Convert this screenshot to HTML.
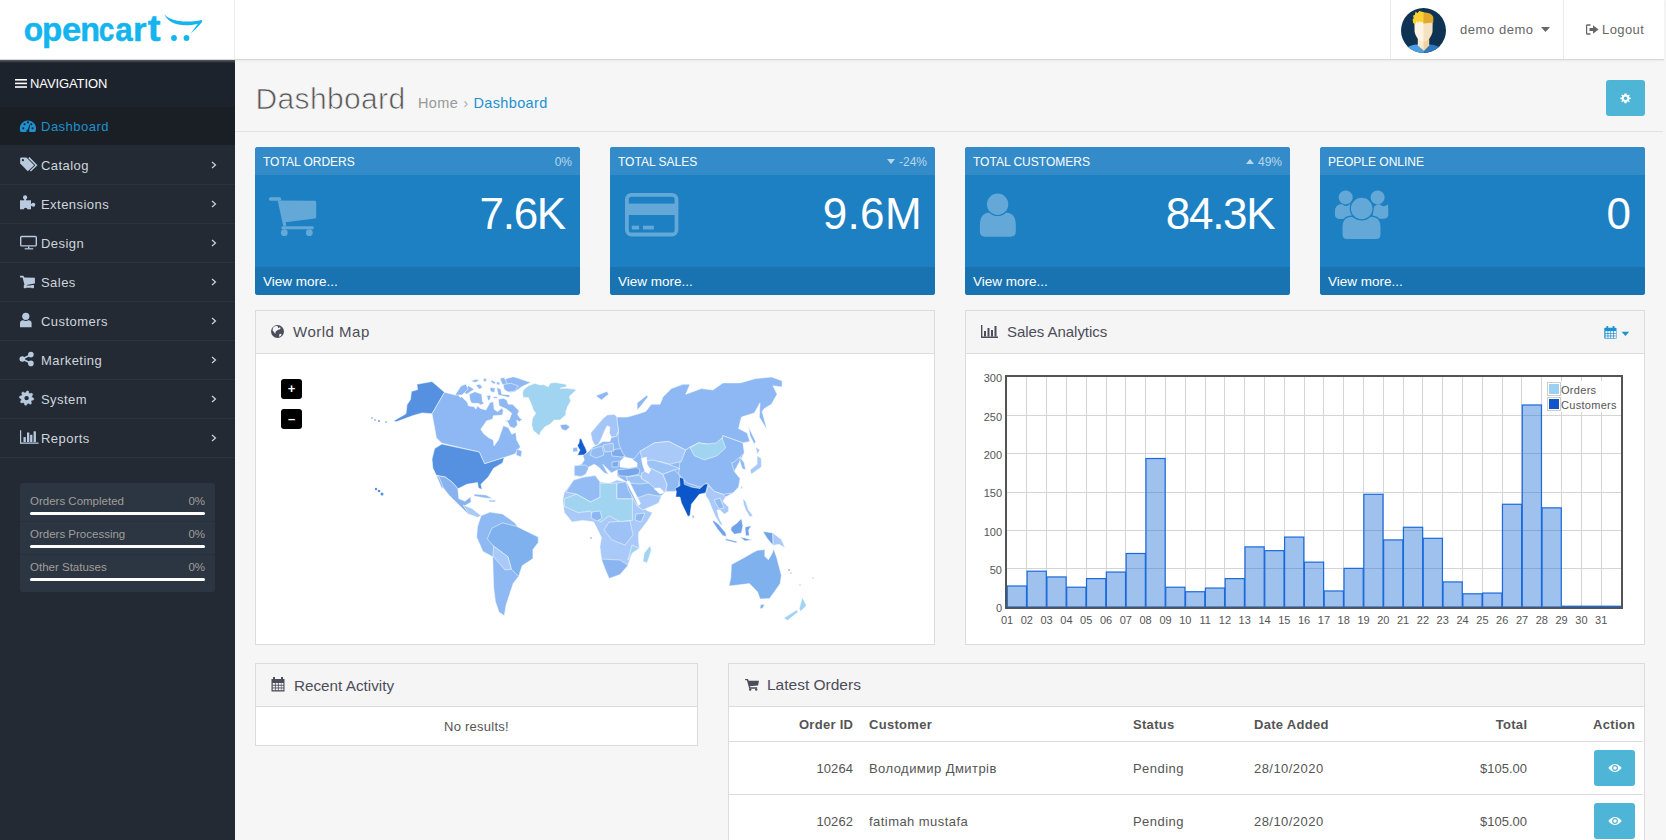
<!DOCTYPE html><html><head><meta charset="utf-8"><title>Dashboard</title><style>
*{box-sizing:border-box;margin:0;padding:0}
html,body{width:1666px;height:840px;overflow:hidden}
body{position:relative;background:#f6f6f6;font-family:"Liberation Sans",sans-serif;font-size:12px;color:#666}
.abs{position:absolute}
#hdr{position:absolute;left:0;top:0;width:1664px;height:60px;background:#fff;border-bottom:1px solid #d8d8d8;box-shadow:0 1px 2px rgba(0,0,0,0.06);z-index:5}
#logo{position:absolute;left:0;top:0;width:235px;height:59px;border-right:1px solid #ececec}
#side{position:absolute;left:0;top:60px;width:235px;height:780px;background:#232a34}
#nav{position:absolute;left:0;top:0;width:235px;height:47px;background:#1d232c;color:#fff;font-size:13px}
.mi{position:absolute;left:0;width:235px;height:39px;border-bottom:1px solid #2b333e;color:#cfd5dc;font-size:13px}
.mi .t{position:absolute;left:41px;top:12px;letter-spacing:0.45px}
.mi .ic{position:absolute;left:19px;top:11px;line-height:0}
.mi .ch{position:absolute;left:211px;top:15px}
.tile{position:absolute;top:147px;width:325px;height:148px;border-radius:3px;background:#1c80c3;color:#fff;overflow:hidden}
.tile .th{position:absolute;left:0;top:0;width:100%;height:28px;background:#338cc9}
.tile .th .l{position:absolute;left:8px;top:8px;font-size:12px}
.tile .th .r{position:absolute;right:8px;top:8px;font-size:12px;color:#b9d6ec}
.tile .tb{position:absolute;right:14px;top:188px}
.tile .tf{position:absolute;left:0;bottom:0;width:100%;height:28px;background:#1973b0}
.tile .tf span{position:absolute;left:8px;top:7px;font-size:13.5px}
.tile .big{position:absolute;right:14px;top:43px;font-size:44px;line-height:48px;letter-spacing:-0.5px}
.tile .icon{position:absolute;left:15px;top:50px}
.panel{position:absolute;background:#fff;border:1px solid #dcdcdc}
.panel .ph{position:absolute;left:0;top:0;width:100%;height:43px;background:#f5f5f5;border-bottom:1px solid #dcdcdc}
.panel .ph .t{position:absolute;left:37px;top:13px;font-size:15px;color:#4c4d5a}
.panel .ph .ic{position:absolute;left:14px;top:15px}
</style></head><body>
<div id="hdr">
<div id="logo">
<svg class="abs" style="left:0;top:0" width="235" height="59" viewBox="0 0 235 59">
<g font-family="Liberation Sans" font-weight="bold" font-size="34" fill="#14b4ee" stroke="#14b4ee" stroke-width="0.5" stroke-linejoin="round"><text transform="translate(25.05,40.8) scale(0.933,1.0) translate(-1.3,0)" x="0" y="0">o</text><text transform="translate(44.25,40.8) scale(0.971,1.0) translate(-2.2,0)" x="0" y="0">p</text><text transform="translate(63.25,40.8) scale(1.018,1.0) translate(-1.3,0)" x="0" y="0">e</text><text transform="translate(82.25,40.8) scale(0.951,1.0) translate(-2.2,0)" x="0" y="0">n</text><text transform="translate(99.85,40.8) scale(0.827,1.0) translate(-1.3,0)" x="0" y="0">c</text><text transform="translate(116.15,40.8) scale(0.922,1.0) translate(-1.0,0)" x="0" y="0">a</text><text transform="translate(135.15,40.8) scale(1.019,1.0) translate(-2.2,0)" x="0" y="0">r</text><text transform="translate(148.15,40.8) scale(1.125,1.08) translate(-0.4,0)" x="0" y="0">t</text></g>
<path d="M164.2 14.3 C171 21.5 185 23.3 201.8 20 L202.3 21.8 C198.5 26.5 195 30 190.8 33.4 C193.5 29.8 195.8 26.8 197.8 23.8 C182 27.5 169 24.5 164.2 14.3Z" fill="#14b4ee"/>
<circle cx="174" cy="38" r="2.9" fill="#14b4ee"/><circle cx="186.5" cy="38" r="2.9" fill="#14b4ee"/>
</svg>
</div>
<div class="abs" style="left:1390px;top:0;width:1px;height:59px;background:#ececec"></div>
<div class="abs" style="left:1563px;top:0;width:1px;height:59px;background:#ececec"></div>
<svg class="abs" style="left:1401px;top:8px" width="45" height="45" viewBox="0 0 45 45">
<defs><clipPath id="avc"><circle cx="22.5" cy="22.5" r="22.5"/></clipPath></defs>
<g clip-path="url(#avc)">
<rect width="45" height="45" fill="#0f3352"/>
<path d="M4 41 Q9 36.5 17 36.5 L23 43.5 L23 45 L4 45Z" fill="#4d9ee3"/>
<path d="M41 41 Q36 36.5 28 36.5 L22.5 43.5 L22.5 45 L41 45Z" fill="#2d78bf"/>
<path d="M16.8 27 L23 27 L23 43 L16.8 37.5Z" fill="#fbecd0"/>
<path d="M28.2 27 L22.5 27 L22.5 43.5 L28.2 37.5Z" fill="#f2d39f"/>
<path d="M13.4 13 L23 13 L23 33.5 L20.5 33.5 Q15 30.5 13.6 24Z" fill="#fef4e4"/>
<path d="M31.7 13 L22.5 13 L22.5 33.5 L24.5 33.5 Q30 30.5 31.5 24Z" fill="#f4e2c2"/>
<path d="M12.2 15 L11.6 11.5 L12.6 10.5 L12.1 7.5 L13.8 7 L14.6 3.6 L16.4 5.2 L18.2 3 L23 4.2 L23 15.5 Q21 12.5 19.5 14.5 L18.5 12.8 L17 15 L15.6 13 L14.3 16.5Z" fill="#fcd232"/>
<path d="M22.5 4.2 Q30.5 4.5 32.3 9 L32.3 14.6 L22.5 15.5Z" fill="#e2a92b"/>
</g></svg>
<div class="abs" style="left:1460px;top:22px;font-size:13px;letter-spacing:0.55px;color:#666">demo demo</div>
<svg class="abs" style="left:1541px;top:27px" width="9" height="5"><path d="M0 0 L9 0 L4.5 5Z" fill="#666"/></svg>
<svg class="abs" style="left:1586px;top:24px" width="13" height="11" viewBox="0 0 13 11">
<path d="M4.5 1 L1.5 1 Q0.5 1 0.5 2 L0.5 9 Q0.5 10 1.5 10 L4.5 10" stroke="#666" stroke-width="1.4" fill="none"/>
<path d="M3.5 4 L7 4 L7 1.2 L12.5 5.5 L7 9.8 L7 7 L3.5 7Z" fill="#666"/></svg>
<div class="abs" style="left:1602px;top:22px;font-size:13px;letter-spacing:0.4px;color:#666">Logout</div>
</div>
<div id="side">
<div id="nav"><div class="abs" style="left:0;top:0;width:235px;height:3px;background:linear-gradient(rgba(255,255,255,0.28),rgba(255,255,255,0))"></div><svg class="abs" style="left:15px;top:19px" width="12" height="9" viewBox="0 0 12 9"><rect y="0" width="12" height="1.6" fill="#fff"/><rect y="3.6" width="12" height="1.6" fill="#fff"/><rect y="7.2" width="12" height="1.6" fill="#fff"/></svg><span class="abs" style="left:30px;top:16px;letter-spacing:-0.1px">NAVIGATION</span></div>
<div class="abs" style="left:0;top:47px;width:235px;height:38px;background:#1a1e25"><span class="abs" style="left:41px;top:12px;font-size:13px;letter-spacing:0.5px;color:#1e91cf">Dashboard</span><svg class="abs" style="left:0;top:0" width="40" height="38" viewBox="0 107 40 38"><path d="M20.6 132 A8.1 8.1 0 1 1 35.2 132 Z" fill="#1e91cf"/><g fill="#1a1e25"><circle cx="23.3" cy="128.3" r="1.05"/><circle cx="24.6" cy="124.2" r="1.05"/><circle cx="27.9" cy="122.4" r="1.05"/><circle cx="31.3" cy="124.2" r="1.05"/><circle cx="32.6" cy="128.3" r="1.05"/></g><path d="M27.1 131.6 L29.6 124.6 L30.2 124.8 L28.8 131.8Z" fill="#1a1e25"/><circle cx="27.9" cy="131" r="1.5" fill="#1a1e25"/></svg></div>
<div class="mi" style="top:86px"><svg class="abs" style="left:0;top:0" width="40" height="39" viewBox="0 146 40 39"><path d="M20.2 158.5 Q20.2 157.4 21.3 157.4 L26.4 157.4 L34.2 165.2 L27.8 171.2 L20.2 163.6Z" fill="#b9cadf"/><circle cx="22.9" cy="160.2" r="1.1" fill="#232a34"/><path d="M28.8 157.6 L36.4 165.2 L30.4 171" stroke="#b9cadf" stroke-width="1.5" fill="none"/></svg><span class="t">Catalog</span><svg class="ch" width="6" height="8" viewBox="0 0 6 8"><path d="M1 1 L4.5 4 L1 7" stroke="#cfd5dc" stroke-width="1.2" fill="none"/></svg></div>
<div class="mi" style="top:125px"><svg class="abs" style="left:0;top:0" width="40" height="39" viewBox="0 185 40 39"><rect x="20" y="200.3" width="11" height="9" fill="#b9cadf"/><circle cx="25.1" cy="197.4" r="2.1" fill="#b9cadf"/><rect x="24.2" y="197.5" width="1.9" height="3.5" fill="#b9cadf"/><circle cx="33.3" cy="204.8" r="2" fill="#b9cadf"/><rect x="30.5" y="203.9" width="3" height="1.9" fill="#b9cadf"/><circle cx="25.6" cy="209.6" r="1.8" fill="#232a34"/></svg><span class="t">Extensions</span><svg class="ch" width="6" height="8" viewBox="0 0 6 8"><path d="M1 1 L4.5 4 L1 7" stroke="#cfd5dc" stroke-width="1.2" fill="none"/></svg></div>
<div class="mi" style="top:164px"><svg class="abs" style="left:0;top:0" width="40" height="39" viewBox="0 224 40 39"><rect x="20.7" y="236.5" width="15.6" height="9.4" rx="1" stroke="#b9cadf" stroke-width="1.4" fill="none"/><rect x="28" y="246.5" width="1.4" height="2" fill="#b9cadf"/><rect x="24.7" y="248.2" width="8.5" height="1.2" fill="#b9cadf"/></svg><span class="t">Design</span><svg class="ch" width="6" height="8" viewBox="0 0 6 8"><path d="M1 1 L4.5 4 L1 7" stroke="#cfd5dc" stroke-width="1.2" fill="none"/></svg></div>
<div class="mi" style="top:203px"><svg class="abs" style="left:0;top:0" width="40" height="39" viewBox="0 263 40 39"><path d="M20 275.8 L23.3 275.8 L24.4 277.6 L34.9 277.8 L34.9 283.6 L26.4 285 L26.8 285.6 L34 285.6 L34 287.8 L25.2 287.8 L22.6 277.4 L20 277.4Z" fill="#b9cadf"/><rect x="23.8" y="285" width="2.3" height="3.2" fill="#b9cadf"/><rect x="31.3" y="285" width="2.5" height="3.2" fill="#b9cadf"/></svg><span class="t">Sales</span><svg class="ch" width="6" height="8" viewBox="0 0 6 8"><path d="M1 1 L4.5 4 L1 7" stroke="#cfd5dc" stroke-width="1.2" fill="none"/></svg></div>
<div class="mi" style="top:242px"><svg class="abs" style="left:0;top:0" width="40" height="39" viewBox="0 302 40 39"><circle cx="25.8" cy="316.3" r="3.6" fill="#b9cadf"/><path d="M20 327.2 L20 323.6 Q20 320.3 23.3 320.3 Q25.8 321.6 28.3 320.3 Q31.6 320.3 31.6 323.6 L31.6 327.2Z" fill="#b9cadf"/></svg><span class="t">Customers</span><svg class="ch" width="6" height="8" viewBox="0 0 6 8"><path d="M1 1 L4.5 4 L1 7" stroke="#cfd5dc" stroke-width="1.2" fill="none"/></svg></div>
<div class="mi" style="top:281px"><svg class="abs" style="left:0;top:0" width="40" height="39" viewBox="0 341 40 39"><path d="M22.3 359 L30.9 354.8 M22.3 359 L30.9 363.3" stroke="#b9cadf" stroke-width="1.6"/><circle cx="30.9" cy="354.6" r="2.8" fill="#b9cadf"/><circle cx="22.3" cy="359" r="2.8" fill="#b9cadf"/><circle cx="30.9" cy="363.4" r="2.8" fill="#b9cadf"/></svg><span class="t">Marketing</span><svg class="ch" width="6" height="8" viewBox="0 0 6 8"><path d="M1 1 L4.5 4 L1 7" stroke="#cfd5dc" stroke-width="1.2" fill="none"/></svg></div>
<div class="mi" style="top:320px"><svg class="abs" style="left:0;top:0" width="40" height="39" viewBox="0 380 40 39"><path d="M25.81 392.76 L26.95 390.91 L28.35 391.12 L28.91 393.22 L29.82 393.76 L31.93 393.26 L32.78 394.40 L31.68 396.28 L31.94 397.31 L33.79 398.45 L33.58 399.85 L31.48 400.41 L30.94 401.32 L31.44 403.43 L30.30 404.28 L28.42 403.18 L27.39 403.44 L26.25 405.29 L24.85 405.08 L24.29 402.98 L23.38 402.44 L21.27 402.94 L20.42 401.80 L21.52 399.92 L21.26 398.89 L19.41 397.75 L19.62 396.35 L21.72 395.79 L22.26 394.88 L21.76 392.77 L22.90 391.92 L24.78 393.02Z" fill="#b9cadf" stroke="#b9cadf" stroke-width="0.6" stroke-linejoin="round"/><circle cx="26.6" cy="398.1" r="2.2" fill="#232a34"/></svg><span class="t">System</span><svg class="ch" width="6" height="8" viewBox="0 0 6 8"><path d="M1 1 L4.5 4 L1 7" stroke="#cfd5dc" stroke-width="1.2" fill="none"/></svg></div>
<div class="mi" style="top:359px"><svg class="abs" style="left:0;top:0" width="40" height="39" viewBox="0 419 40 39"><path d="M20.6 430.2 L20.6 443.2 L38.6 443.2" stroke="#b9cadf" stroke-width="1.2" fill="none"/><rect x="23.5" y="437.1" width="2.3" height="4.9" fill="#b9cadf"/><rect x="27" y="432.5" width="2.3" height="9.5" fill="#b9cadf"/><rect x="30.1" y="434.8" width="2.3" height="7.2" fill="#b9cadf"/><rect x="33.6" y="431.3" width="2.3" height="10.7" fill="#b9cadf"/></svg><span class="t">Reports</span><svg class="ch" width="6" height="8" viewBox="0 0 6 8"><path d="M1 1 L4.5 4 L1 7" stroke="#cfd5dc" stroke-width="1.2" fill="none"/></svg></div>
<div class="abs" style="left:20px;top:423px;width:195px;height:109px;background:#2c3643;border-radius:3px">
<span class="abs" style="left:10px;top:12px;font-size:11.5px;color:#a09d98">Orders Completed</span><span class="abs" style="right:10px;top:12px;font-size:11.5px;color:#a09d98">0%</span>
<div class="abs" style="left:10px;top:28.8px;width:175px;height:3.6px;background:#fff;border-radius:2px"></div>
<div class="abs" style="left:0;top:37.6px;width:195px;height:1px;background:#27303b"></div>
<span class="abs" style="left:10px;top:45px;font-size:11.5px;color:#a09d98">Orders Processing</span><span class="abs" style="right:10px;top:45px;font-size:11.5px;color:#a09d98">0%</span>
<div class="abs" style="left:10px;top:61.8px;width:175px;height:3.6px;background:#fff;border-radius:2px"></div>
<div class="abs" style="left:0;top:70.6px;width:195px;height:1px;background:#27303b"></div>
<span class="abs" style="left:10px;top:78px;font-size:11.5px;color:#a09d98">Other Statuses</span><span class="abs" style="right:10px;top:78px;font-size:11.5px;color:#a09d98">0%</span>
<div class="abs" style="left:10px;top:94.8px;width:175px;height:3.6px;background:#fff;border-radius:2px"></div>
</div>
</div>
<div class="abs" style="left:235px;top:131px;width:1428px;height:1px;background:#e2e2e2"></div>
<div class="abs" style="left:255.5px;top:81.5px;font-size:30px;color:#555;letter-spacing:0.35px;-webkit-text-stroke:0.7px #f6f6f6">Dashboard</div>
<div class="abs" style="left:418px;top:94.5px;font-size:14.5px;letter-spacing:0.35px;color:#999">Home <span style="font-size:14px;color:#aaa;margin:0 0 0 1px;letter-spacing:0">&#8250;</span> <span style="color:#1e91cf;letter-spacing:0.35px;margin-left:1px">Dashboard</span></div>
<div class="abs" style="left:1606px;top:80px;width:39px;height:36px;background:#4fb5d6;border-radius:3px"><svg class="abs" style="left:14px;top:13px" width="11" height="11" viewBox="0 0 14 14"><path d="M7 0.5 L8.3 0.5 L8.6 2.3 L10 2.9 L11.5 1.8 L12.4 2.8 L11.3 4.2 L11.9 5.6 L13.6 5.9 L13.6 7.6 L11.9 7.9 L11.3 9.3 L12.4 10.7 L11.5 11.7 L10 10.6 L8.6 11.2 L8.3 13 L5.7 13 L5.4 11.2 L4 10.6 L2.5 11.7 L1.6 10.7 L2.7 9.3 L2.1 7.9 L0.4 7.6 L0.4 5.9 L2.1 5.6 L2.7 4.2 L1.6 2.8 L2.5 1.8 L4 2.9 L5.4 2.3 L5.7 0.5Z" fill="#fff"/><circle cx="7" cy="6.75" r="2.2" fill="#4fb5d6"/></svg></div>
<div class="tile" style="left:255px">
<div class="th"><span class="l">TOTAL ORDERS</span>
<span class="r">0%</span>
</div>
<svg class="abs" style="left:0;top:0" width="325" height="148"><g transform="translate(7,41)"><path d="M8.6 11 L17.6 11" stroke="#64a8d8" stroke-width="3.4" stroke-linecap="round"/><path d="M15.6 12.4 L53 12.8 Q54.2 12.9 54.2 14.2 L54.2 29.2 Q54.2 30.2 53 30.4 L23.6 34.2 L24.4 37.6 L21.4 38.6 Z" fill="#64a8d8"/><path d="M20.8 39.8 L50.4 39.8" stroke="#64a8d8" stroke-width="3" stroke-linecap="round"/><circle cx="22.3" cy="44.7" r="3.4" fill="#64a8d8"/><circle cx="47.3" cy="44.7" r="3.4" fill="#64a8d8"/></g></svg>
<div class="big" style="letter-spacing:-1.33px;right:15.2px">7.6K</div>
<div class="tf"><span>View more...</span></div>
</div>
<div class="tile" style="left:610px">
<div class="th"><span class="l">TOTAL SALES</span>
<span class="r"><svg width="8" height="5" style="margin-right:4px;vertical-align:2px"><path d="M0 0 L8 0 L4 5Z" fill="#b9d6ec"/></svg>-24%</span>
</div>
<svg class="abs" style="left:0;top:0" width="325" height="148"><g transform="translate(15,46)"><rect x="1.9" y="1.9" width="49.6" height="39.6" rx="4.5" stroke="#64a8d8" stroke-width="3.8" fill="none"/><rect x="2" y="10.6" width="50" height="11.4" fill="#64a8d8"/><rect x="6.8" y="32.7" width="7.3" height="3.8" fill="#64a8d8"/><rect x="17.9" y="32.7" width="11" height="3.8" fill="#64a8d8"/></g></svg>
<div class="big" style="letter-spacing:0.37px;right:13px">9.6M</div>
<div class="tf"><span>View more...</span></div>
</div>
<div class="tile" style="left:965px">
<div class="th"><span class="l">TOTAL CUSTOMERS</span>
<span class="r"><svg width="8" height="5" style="margin-right:4px;vertical-align:2px"><path d="M0 5 L8 5 L4 0Z" fill="#b9d6ec"/></svg>49%</span>
</div>
<svg class="abs" style="left:0;top:0" width="325" height="148"><g transform="translate(-965,-147)"><path d="M979.9 231.5 L979.9 225 Q979.9 212.6 990.5 212.6 Q997.5 219 1005 212.6 Q1015.8 212.6 1015.8 225 L1015.8 231.5 Q1015.8 236.7 1010.6 236.7 L985.1 236.7 Q979.9 236.7 979.9 231.5Z" fill="#64a8d8"/><circle cx="997.6" cy="204.3" r="11.8" fill="#1c80c3"/><circle cx="997.6" cy="204.3" r="10.7" fill="#64a8d8"/></g></svg>
<div class="big" style="letter-spacing:-1.3px;right:15.7px">84.3K</div>
<div class="tf"><span>View more...</span></div>
</div>
<div class="tile" style="left:1320px">
<div class="th"><span class="l">PEOPLE ONLINE</span>
</div>
<svg class="abs" style="left:0;top:0" width="325" height="148"><g transform="translate(-1320,-147)"><path d="M1335 228 L1335 212 Q1335 204.3 1342 204.3 Q1346 208 1350 204.3 Q1356.5 204.3 1356.5 212 L1356.5 228 Q1356.5 218.7 1350 218.7 L1341 218.7 Q1335 218.7 1335 214Z" fill="#64a8d8"/><path d="M1335 212.5 Q1335 204.3 1342 204.3 Q1346 208 1350 204.3 Q1356.5 204.3 1356.5 212 L1356.5 214.6 Q1356.5 218.7 1352 218.7 L1339 218.7 Q1335 218.7 1335 214.6Z" fill="#64a8d8"/><path d="M1372.7 212.5 Q1372.7 204.3 1379.7 204.3 Q1383.7 208 1387.7 204.3 Q1388.3 204.3 1388.3 212 L1388.3 214.6 Q1388.3 218.7 1384 218.7 L1376.7 218.7 Q1372.7 218.7 1372.7 214.6Z" fill="#64a8d8"/><circle cx="1345.7" cy="197.4" r="7" fill="#64a8d8"/><circle cx="1377.6" cy="197.4" r="7" fill="#64a8d8"/><path d="M1341.9 234.5 L1341.9 227 Q1341.9 216.1 1352 216.1 Q1361.7 223 1371 216.1 Q1381.1 216.1 1381.1 227 L1381.1 234.5 Q1381.1 239.7 1376 239.7 L1347 239.7 Q1341.9 239.7 1341.9 234.5Z" fill="#64a8d8" stroke="#1c80c3" stroke-width="1.3"/><circle cx="1361.7" cy="208.5" r="11.4" fill="#64a8d8" stroke="#1c80c3" stroke-width="1.3"/></g></svg>
<div class="big" style="letter-spacing:0px;right:14px">0</div>
<div class="tf"><span>View more...</span></div>
</div>
<div class="panel" style="left:255px;top:310px;width:680px;height:335px">
<div class="ph"><span class="ic" style="left:15px;top:14px;line-height:0"><svg width="13" height="13" viewBox="0 0 13 13"><circle cx="6.5" cy="6.5" r="6.5" fill="#4c4d5a"/><path d="M2.2 2.5 Q4 0.8 6.5 1.2 Q7.5 2 7 3 Q8.5 3.2 8.8 2 Q9.8 2.5 9.5 3.8 Q8 5 7.2 4.6 Q6.2 6.2 5.2 6 Q4.2 6.8 4.6 8.4 Q3.6 8.6 3.2 7.2 Q2.2 6 1.6 5.4 Q1.6 3.6 2.2 2.5Z M8.6 8.8 Q10 8.4 10.6 9.4 Q10 11 8.6 11.8 Q7.8 11.2 8.2 10.2Z" fill="#f5f5f5"/></svg></span><span class="t" style="top:12px;letter-spacing:0.5px">World Map</span></div>
</div>
<div class="abs" style="left:281px;top:379px;width:21px;height:20px;background:#000;border-radius:3px;color:#fff;font-size:13px;line-height:20px;text-align:center;font-weight:bold">+</div>
<div class="abs" style="left:281px;top:409px;width:21px;height:20px;background:#000;border-radius:3px;color:#fff;font-size:13px;line-height:19px;text-align:center;font-weight:bold">&#8211;</div>
<svg class="abs" style="left:256px;top:354px" width="678" height="290" viewBox="256 354 678 290">
<g stroke="#ffffff" stroke-width="0.5" stroke-linejoin="round">
<path d="M416.8 384.3 L432.0 381.6 L444.5 392.3 L432.0 413.8 L422.1 412.9 L413.2 415.5 L396.3 421.8 L393.6 420.9 L406.0 413.8 L407.0 404.8 L410.5 399.5 L411.4 391.4 L417.7 389.6Z" fill="#5591e0"/>
<path d="M444.5 392.3 L455.0 395.0 L458.3 394.2 L460.0 397.5 L461.7 396.7 L467.5 402.5 L468.3 405.8 L474.2 406.7 L475.8 409.2 L477.5 405.8 L480.0 408.3 L485.8 410.0 L488.3 405.8 L490.0 402.5 L493.3 401.7 L494.2 409.2 L497.5 411.7 L501.7 408.3 L503.3 410.0 L502.5 415.0 L493.3 415.8 L492.5 419.2 L486.7 420.8 L480.8 429.2 L483.3 433.3 L488.3 437.5 L493.3 440.0 L494.0 446.0 L498.3 440.0 L503.3 425.8 L508.3 427.5 L510.0 430.8 L511.7 434.2 L515.8 432.5 L516.7 440.0 L520.4 446.8 L515.0 453.9 L504.3 457.5 L484.6 463.8 L479.3 452.1 L441.8 443.2 L436.4 437.9 L432.0 413.8Z" fill="#8db8f3"/>
<path d="M498.3 399.2 L503.3 398.3 L506.7 400.0 L508.3 404.2 L512.5 404.2 L515.0 406.7 L519.2 410.8 L517.5 414.2 L520.0 418.3 L522.5 419.2 L519.2 421.7 L516.7 420.0 L517.5 425.0 L514.2 428.3 L510.0 426.7 L507.5 421.7 L504.2 420.8 L509.2 420.0 L511.7 413.3 L506.7 409.2 L499.2 405.8Z" fill="#8db8f3"/>
<path d="M469.2 394.2 L475.0 391.7 L481.7 394.2 L482.5 401.7 L484.2 403.3 L480.8 405.0 L478.3 403.3 L471.7 403.3 L470.0 400.0Z" fill="#8db8f3"/>
<path d="M463.3 391.7 L468.3 385.8 L474.2 389.2 L466.7 394.2Z" fill="#8db8f3"/>
<path d="M507.5 378.3 L513.3 376.7 L518.3 378.3 L530.8 382.5 L521.7 386.7 L515.0 391.7 L510.0 392.5 L504.2 390.0 L509.2 386.7 L501.7 380.8Z" fill="#8db8f3"/>
<path d="M496.7 387.5 L500.8 389.2 L501.7 394.2 L510.0 395.0 L509.2 397.5 L498.3 395.0Z" fill="#8db8f3"/>
<path d="M470.8 380.8 L476.7 379.2 L479.2 380.8 L475.0 382.5Z" fill="#8db8f3"/>
<path d="M475.8 385.0 L480.0 384.2 L482.5 387.5 L479.2 389.2Z" fill="#8db8f3"/>
<path d="M486.7 395.8 L490.8 395.0 L490.0 399.2 L488.3 400.8Z" fill="#8db8f3"/>
<path d="M493.3 396.7 L498.3 396.7 L496.7 398.3 L493.3 398.3Z" fill="#8db8f3"/>
<path d="M491.7 380.0 L495.8 382.5 L494.2 384.2 L490.8 381.7Z" fill="#8db8f3"/>
<path d="M500.0 378.3 L504.2 377.5 L507.5 384.2 L504.2 385.8 L501.7 383.3Z" fill="#8db8f3"/>
<path d="M517.0 449.0 L522.0 451.0 L521.0 457.0 L516.0 455.0Z" fill="#8db8f3"/>
<path d="M483.3 378.3 L486.7 378.8 L486.0 381.7 L483.5 381.2Z" fill="#8db8f3"/>
<path d="M496.7 381.7 L500.0 382.5 L499.5 385.0 L496.5 384.5Z" fill="#8db8f3"/>
<path d="M490.0 387.5 L495.0 388.0 L494.5 392.5 L490.5 391.5Z" fill="#8db8f3"/>
<path d="M503.3 384.5 L511.0 383.3 L518.3 386.0 L515.0 391.0 L508.0 392.0 L504.0 389.0Z" fill="#8db8f3"/>
<path d="M455.0 395.0 L461.0 386.0 L466.0 384.0 L468.0 389.0 L462.0 395.0Z" fill="#8db8f3"/>
<path d="M523.3 390.0 L528.3 385.8 L535.0 383.3 L540.0 385.0 L543.3 384.6 L548.3 386.7 L550.0 383.3 L555.0 382.5 L565.8 384.2 L566.7 386.7 L560.0 388.3 L567.5 388.3 L576.7 389.6 L571.7 394.2 L569.2 396.7 L570.8 400.8 L567.5 406.7 L565.8 411.7 L565.8 415.0 L560.0 420.0 L554.2 420.0 L550.0 424.2 L545.0 426.7 L540.8 431.7 L539.2 435.8 L536.7 433.3 L533.3 430.8 L531.7 425.0 L532.5 418.3 L535.8 413.3 L533.3 410.0 L531.7 405.0 L528.3 397.5 L523.3 397.5 L522.5 393.3Z" fill="#a1d4f0"/>
<path d="M560.0 425.0 L565.8 424.2 L570.0 426.7 L565.8 430.8 L561.7 429.2Z" fill="#8ab4f0"/>
<path d="M441.8 444.1 L479.3 452.1 L484.6 463.8 L504.3 457.5 L502.5 462.9 L493.6 468.2 L488.2 477.1 L481.0 484.3 L482.0 489.6 L478.4 487.9 L477.5 482.5 L466.8 484.3 L457.9 488.8 L452.5 482.5 L445.4 477.1 L436.4 475.4 L432.9 468.2 L432.0 459.3 L434.6 448.6Z" fill="#5591e0"/>
<path d="M436.4 475.4 L445.4 477.1 L452.5 482.5 L457.9 488.8 L458.8 498.6 L465.0 501.2 L470.4 496.8 L471.2 502.0 L465.0 505.7 L472.1 512.9 L468.6 514.6 L457.9 503.9 L448.9 495.0 L441.8 486.0 L438.2 478.9Z" fill="#88b3ef"/>
<path d="M436.4 475.4 L439.0 477.0 L443.0 487.0 L442.0 489.0Z" fill="#88b3ef"/>
<path d="M463.2 505.0 L472.1 508.6 L481.1 515.7 L477.5 517.5 L468.6 513.9Z" fill="#a9caf8"/>
<path d="M474.0 494.0 L486.0 495.0 L493.0 498.5 L485.0 498.0 L474.0 496.0Z" fill="#8fb9f3"/>
<path d="M489.0 500.0 L496.0 500.0 L495.0 502.0 L489.0 502.0Z" fill="#a9caf8"/>
<path d="M481.1 515.7 L490.0 512.1 L502.5 513.9 L515.0 522.9 L518.6 528.2 L538.2 537.1 L538.2 542.5 L532.9 549.6 L532.9 558.6 L522.1 565.7 L518.6 576.4 L513.2 583.6 L509.6 594.3 L506.1 605.0 L504.3 615.7 L498.9 612.1 L495.4 601.4 L493.6 587.1 L492.7 556.8 L482.9 551.4 L476.6 537.1 L477.5 526.4Z" fill="#8fb9f3"/>
<path d="M491.8 528.2 L502.5 522.9 L516.8 526.4 L538.2 537.1 L538.2 542.5 L532.9 549.6 L532.9 558.6 L522.1 565.7 L518.6 576.4 L511.4 569.3 L507.9 556.8 L493.6 546.1 L487.3 538.9Z" fill="#80b1ef"/>
<path d="M493.6 546.1 L507.9 556.8 L511.4 569.3 L505.0 570.0 L498.0 562.0 L493.0 556.0Z" fill="#a9caf8"/>
<path d="M564.3 492.5 L573.6 480.1 L584.4 477.0 L595.2 475.5 L599.9 481.7 L609.2 483.2 L616.9 480.1 L626.2 481.7 L630.9 491.0 L638.6 504.9 L647.9 511.1 L652.5 512.6 L647.9 520.4 L638.6 532.8 L638.6 540.5 L639.4 548.2 L632.4 552.9 L627.8 565.3 L620.0 574.6 L609.2 578.4 L606.1 571.5 L601.4 559.1 L599.9 546.7 L601.4 537.4 L596.8 528.1 L593.7 521.9 L582.9 520.4 L572.0 521.9 L564.3 512.6 L562.7 500.2Z" fill="#a9caf8"/>
<path d="M598.3 483.2 L616.9 483.2 L616.9 498.7 L632.4 498.7 L632.4 520.4 L620.0 521.9 L609.2 515.7 L601.4 521.9 L593.7 518.8 L590.6 511.1 L578.2 512.6 L564.3 506.4 L564.3 498.7 L576.7 494.1 L590.6 501.8 L599.9 497.2Z" fill="#a1d4f0"/>
<path d="M573.6 480.1 L584.4 477.0 L595.2 475.5 L599.9 481.7 L599.9 497.2 L590.6 501.8 L576.7 494.1 L566.0 492.0Z" fill="#93bcf4"/>
<path d="M616.9 483.2 L626.2 481.7 L630.9 491.0 L632.4 498.7 L616.9 498.7Z" fill="#93bcf4"/>
<path d="M592.0 512.0 L600.0 511.0 L602.0 518.0 L597.0 521.0 L591.0 518.0Z" fill="#8db6f2"/>
<path d="M609.0 522.0 L630.0 521.0 L633.0 535.0 L625.0 545.0 L612.0 540.0 L604.0 530.0Z" fill="#9ec2f6"/>
<path d="M601.4 559.1 L620.0 560.0 L628.0 565.3 L620.0 574.6 L609.2 578.4 L606.1 571.5Z" fill="#8ab5f1"/>
<path d="M632.0 545.0 L639.4 548.2 L632.4 552.9 L628.0 560.0Z" fill="#a1d4f0"/>
<path d="M650.0 545.7 L651.4 550.0 L647.1 562.9 L642.9 561.4 L644.3 552.9Z" fill="#a1d4f0"/>
<path d="M636.0 514.0 L645.0 513.0 L641.0 522.0 L635.0 520.0Z" fill="#8fb9f3"/>
<path d="M582.9 455.7 L588.6 451.4 L592.9 447.1 L598.6 444.3 L602.9 441.4 L610.0 441.4 L611.4 437.1 L614.3 437.1 L617.1 434.3 L618.6 430.0 L617.1 421.4 L625.0 425.0 L660.0 420.0 L700.0 415.0 L735.0 425.0 L742.0 440.0 L744.3 452.9 L734.3 471.4 L740.0 478.6 L738.6 487.1 L732.9 492.9 L725.7 497.1 L705.7 492.9 L700.0 488.6 L691.4 487.1 L675.7 491.4 L665.7 491.4 L661.4 495.7 L658.6 502.9 L642.9 510.0 L637.1 505.7 L628.6 490.0 L626.0 481.7 L620.0 478.0 L617.1 476.0 L617.1 470.0 L611.4 472.9 L608.6 470.0 L602.9 464.3 L605.7 470.0 L608.6 474.3 L604.3 472.9 L598.6 467.1 L594.3 464.3 L588.6 467.1 L585.7 474.3 L581.4 476.4 L574.3 475.7 L574.3 465.7 L581.4 464.3 L584.3 460.0Z" fill="#8fb9f3"/>
<path d="M579.5 438.5 L581.5 439.0 L583.0 443.0 L585.5 448.0 L587.0 452.0 L584.0 455.0 L577.5 455.2 L580.0 450.0 L578.6 448.0 L577.5 445.5 L579.0 443.0Z" fill="#125ccf"/>
<path d="M572.9 447.9 L577.1 447.1 L577.9 451.4 L572.9 452.1Z" fill="#8fb9f3"/>
<path d="M590.7 432.9 L595.7 427.1 L602.9 418.6 L607.1 415.0 L614.3 414.3 L617.1 417.1 L618.6 430.0 L616.4 436.4 L611.4 437.1 L609.3 432.9 L610.0 427.1 L607.1 425.7 L604.3 431.4 L601.4 438.6 L598.6 444.3 L595.0 445.7 L592.1 440.0Z" fill="#a3c5f7"/>
<path d="M611.0 450.0 L625.0 448.0 L631.0 454.0 L622.0 457.0 L612.0 456.0Z" fill="#7eabec"/>
<path d="M592.0 449.0 L602.0 446.0 L604.0 455.0 L596.0 458.0 L590.0 455.0Z" fill="#93bcf4"/>
<path d="M603.0 445.0 L613.0 443.0 L614.0 451.0 L605.0 452.0Z" fill="#9fc3f5"/>
<path d="M574.3 465.7 L585.7 465.0 L588.6 468.0 L585.7 474.3 L581.4 476.4 L574.3 475.7Z" fill="#93bcf4"/>
<path d="M617.1 470.0 L637.1 467.6 L640.0 470.0 L638.6 474.3 L628.6 476.4 L618.6 475.7Z" fill="#77a6ea"/>
<path d="M612.0 462.0 L619.0 461.0 L618.0 467.0 L612.0 467.0Z" fill="#7eabec"/>
<path d="M595.7 395.7 L607.1 391.4 L608.6 394.3 L601.4 400.0Z" fill="#8db8f3"/>
<path d="M637.1 402.9 L647.1 395.0 L647.9 397.1 L640.0 407.1 L637.1 410.0Z" fill="#8db8f3"/>
<path d="M617.1 417.1 L627.1 417.1 L637.1 414.3 L645.7 411.4 L651.4 404.3 L660.0 404.3 L662.9 397.1 L671.4 388.6 L682.9 384.3 L690.0 384.3 L685.7 394.3 L701.4 388.6 L712.9 390.0 L722.9 382.9 L740.0 382.9 L755.7 378.6 L771.4 377.1 L782.1 380.7 L782.1 387.1 L772.9 385.7 L777.1 394.3 L771.4 404.3 L764.3 408.6 L762.1 411.4 L767.1 430.0 L759.3 417.1 L760.0 402.9 L754.3 412.9 L741.4 417.1 L738.6 428.6 L747.1 432.9 L750.0 441.4 L742.9 442.9 L722.9 435.7 L720.0 445.7 L707.1 444.3 L698.6 442.9 L690.0 447.1 L685.7 450.0 L668.6 441.4 L654.3 442.9 L640.0 451.4 L634.3 458.6 L627.1 459.0 L622.0 452.0 L619.0 444.3 L618.0 437.1 L618.6 430.0 L617.1 421.4Z" fill="#8db8f3"/>
<path d="M690.0 447.1 L698.6 442.9 L707.1 444.3 L720.0 445.7 L722.9 435.7 L742.9 442.9 L744.3 452.9 L740.0 457.1 L734.0 462.0 L731.4 462.9 L734.3 471.4 L740.0 478.6 L738.6 487.1 L732.9 492.9 L722.9 494.3 L714.3 491.4 L707.1 482.9 L700.0 487.1 L687.1 482.9 L678.6 474.3 L680.0 461.4 L685.7 450.0Z" fill="#8db8f3"/>
<path d="M690.0 447.9 L698.6 442.9 L707.0 444.0 L716.0 443.0 L722.0 438.0 L725.7 447.9 L717.1 455.7 L704.3 460.0 L694.3 455.7Z" fill="#a1d4f0"/>
<path d="M640.0 451.4 L654.3 442.9 L668.6 441.4 L685.7 450.0 L681.4 461.4 L670.0 464.3 L660.0 461.4 L651.4 464.3 L642.9 461.4Z" fill="#a9caf8"/>
<path d="M642.9 461.4 L652.9 460.0 L668.6 464.3 L680.0 468.6 L674.3 470.0 L662.9 474.3 L651.4 468.6 L645.0 467.0Z" fill="#9cc3f6"/>
<path d="M641.4 472.9 L651.4 468.6 L662.9 474.3 L667.1 484.3 L665.7 491.4 L657.1 490.0 L648.6 482.9 L641.4 478.6Z" fill="#a9caf8"/>
<path d="M662.9 474.3 L674.3 470.0 L680.0 475.7 L678.6 485.7 L675.7 491.4 L665.7 491.4 L667.1 484.3Z" fill="#8fb9f3"/>
<path d="M626.0 477.0 L640.0 475.0 L641.4 478.6 L648.6 482.9 L640.0 484.0 L628.6 482.9Z" fill="#9cc3f6"/>
<path d="M637.0 498.0 L648.0 494.0 L658.0 496.0 L661.4 495.7 L658.6 502.9 L642.9 510.0 L637.1 505.7Z" fill="#a9caf8"/>
<path d="M620.0 461.4 L624.3 457.1 L631.4 458.6 L637.1 462.9 L637.1 466.5 L628.6 468.0 L620.0 467.1Z" fill="#ffffff"/>
<path d="M641.4 458.6 L646.4 457.1 L647.1 464.3 L650.7 470.0 L648.6 473.6 L645.0 471.4 L642.9 465.7Z" fill="#ffffff"/>
<path d="M626.5 481.5 L629.0 481.0 L640.5 503.5 L638.6 505.5Z" fill="#ffffff"/>
<path d="M654.0 488.5 L660.0 488.0 L664.0 492.5 L660.0 494.0Z" fill="#ffffff"/>
<path d="M679.3 477.1 L683.6 478.6 L684.3 484.3 L691.4 487.1 L700.0 488.6 L704.3 484.3 L707.9 483.6 L705.7 492.9 L699.3 494.3 L691.4 504.3 L690.0 515.7 L687.9 516.4 L681.4 502.9 L680.0 497.1 L675.7 497.1 L676.4 491.4 L675.0 488.6 L680.0 485.7Z" fill="#0b57c9"/>
<path d="M705.7 492.9 L708.6 485.7 L714.3 491.4 L722.9 494.3 L725.7 497.1 L722.9 501.4 L728.6 507.1 L728.6 511.4 L724.3 514.3 L720.0 510.0 L717.1 510.0 L718.6 517.1 L722.9 525.7 L720.0 524.3 L715.0 515.7 L711.4 507.1 L708.6 500.0 L705.7 495.7Z" fill="#a9caf8"/>
<path d="M714.0 500.0 L720.0 498.0 L724.0 508.0 L719.0 509.0Z" fill="#93bcf4"/>
<path d="M692.1 515.0 L694.3 515.7 L693.6 518.6 L692.1 517.9Z" fill="#8fb9f3"/>
<path d="M712.9 520.0 L718.6 524.3 L725.7 532.9 L726.4 536.4 L722.9 535.7 L717.1 528.6 L712.9 522.1Z" fill="#6fa2e8"/>
<path d="M725.7 538.6 L737.1 541.4 L736.4 542.9 L725.7 540.3Z" fill="#6fa2e8"/>
<path d="M731.4 527.1 L737.1 522.9 L741.4 518.6 L742.9 525.7 L741.4 532.9 L734.3 534.3 L730.7 530.0Z" fill="#6fa2e8"/>
<path d="M745.0 527.1 L751.4 525.7 L748.6 530.0 L749.3 535.7 L745.7 535.7Z" fill="#6fa2e8"/>
<path d="M742.9 498.6 L745.7 501.4 L748.6 510.0 L752.9 515.7 L750.0 517.1 L745.7 510.0 L743.6 504.3Z" fill="#a9caf8"/>
<path d="M741.0 486.0 L742.5 486.5 L742.0 489.0 L740.5 488.5Z" fill="#a9caf8"/>
<path d="M762.9 531.4 L772.9 532.9 L773.1 545.5 L767.1 538.3Z" fill="#6fa2e8"/>
<path d="M772.9 532.9 L781.4 539.5 L785.0 547.9 L779.0 544.3 L773.1 545.5Z" fill="#a9caf8"/>
<path d="M740.0 537.0 L745.0 538.0 L752.0 540.0 L745.0 541.0Z" fill="#6fa2e8"/>
<path d="M757.1 455.7 L761.4 458.6 L761.4 467.1 L751.4 474.3 L750.0 470.0 L757.1 464.3Z" fill="#a9caf8"/>
<path d="M755.7 447.1 L760.0 450.0 L757.1 454.3Z" fill="#a9caf8"/>
<path d="M748.6 427.1 L755.7 441.4 L754.3 444.3 L750.0 435.7Z" fill="#8db8f3"/>
<path d="M740.0 457.1 L744.3 462.9 L745.7 470.0 L742.1 468.6 L740.0 461.4Z" fill="#8fb9f3"/>
<path d="M731.4 564.5 L744.5 557.4 L752.9 552.6 L757.6 550.2 L764.8 549.6 L764.8 556.2 L768.3 559.8 L771.9 553.8 L773.7 549.0 L776.7 557.4 L778.5 564.5 L781.4 575.2 L780.2 583.6 L774.3 591.9 L769.5 598.5 L760.0 599.0 L757.6 591.9 L754.0 588.3 L749.3 583.6 L739.8 584.8 L729.0 586.0 L730.8 577.6Z" fill="#80b1ef"/>
<path d="M760.6 604.4 L764.8 604.4 L762.4 608.6 L760.0 608.6Z" fill="#80b1ef"/>
<path d="M802.3 597.3 L806.4 605.6 L800.5 611.5 L799.3 608.6Z" fill="#a1d4f0"/>
<path d="M796.9 609.8 L798.1 612.1 L787.4 620.5 L783.8 618.1Z" fill="#a1d4f0"/>
</g>
<circle cx="372" cy="418" r="0.8" fill="#5591e0"/>
<circle cx="375" cy="420" r="0.8" fill="#5591e0"/>
<circle cx="379" cy="421" r="0.9" fill="#5591e0"/>
<circle cx="386" cy="422" r="0.8" fill="#5591e0"/>
<circle cx="376" cy="489" r="1.2" fill="#5591e0"/>
<circle cx="379" cy="491" r="1.3" fill="#5591e0"/>
<circle cx="382" cy="494" r="1.5" fill="#5591e0"/>
<circle cx="591" cy="538" r="0.7" fill="#5591e0"/>
<circle cx="800" cy="585" r="0.6" fill="#5591e0"/>
<circle cx="791" cy="573" r="0.6" fill="#5591e0"/>
<circle cx="789" cy="570" r="0.8" fill="#5591e0"/>
<circle cx="813" cy="578" r="0.5" fill="#5591e0"/>
</svg>
<div class="panel" style="left:965px;top:310px;width:680px;height:335px">
<div class="ph"><span class="ic" style="left:15px;top:14px;line-height:0"><svg width="17" height="13" viewBox="0 0 17 13"><path d="M0.7 0 L0.7 12.3 L17 12.3" stroke="#4c4d5a" stroke-width="1.4" fill="none"/><rect x="3" y="6" width="2" height="5.5" fill="#4c4d5a"/><rect x="6.5" y="3" width="2" height="8.5" fill="#4c4d5a"/><rect x="10" y="5" width="2" height="6.5" fill="#4c4d5a"/><rect x="13.5" y="1" width="2" height="10.5" fill="#4c4d5a"/></svg></span><span class="t" style="left:41px;top:12px;letter-spacing:-0.05px">Sales Analytics</span>
<svg class="abs" style="left:637.7px;top:15.2px" width="27" height="13" viewBox="0 0 27 13"><rect x="0.3" y="1.8" width="12.2" height="10.9" rx="0.8" fill="#1e91cf"/><rect x="1.5" y="5.1" width="2.1" height="1.9" fill="#f5f5f5"/><rect x="4.3" y="5.1" width="2.1" height="1.9" fill="#f5f5f5"/><rect x="7.1" y="5.1" width="2.1" height="1.9" fill="#f5f5f5"/><rect x="9.9" y="5.1" width="2.1" height="1.9" fill="#f5f5f5"/><rect x="1.5" y="7.7" width="2.1" height="1.9" fill="#f5f5f5"/><rect x="4.3" y="7.7" width="2.1" height="1.9" fill="#f5f5f5"/><rect x="7.1" y="7.7" width="2.1" height="1.9" fill="#f5f5f5"/><rect x="9.9" y="7.7" width="2.1" height="1.9" fill="#f5f5f5"/><rect x="1.5" y="10.3" width="2.1" height="1.9" fill="#f5f5f5"/><rect x="4.3" y="10.3" width="2.1" height="1.9" fill="#f5f5f5"/><rect x="7.1" y="10.3" width="2.1" height="1.9" fill="#f5f5f5"/><rect x="9.9" y="10.3" width="2.1" height="1.9" fill="#f5f5f5"/><rect x="2.4" y="0" width="1.8" height="3.6" rx="0.6" fill="#1e91cf"/><rect x="8.6" y="0" width="1.8" height="3.6" rx="0.6" fill="#1e91cf"/><path d="M17.6 5.7 L25.2 5.7 L21.4 10Z" fill="#1e91cf"/></svg>
</div>
</div>
<svg class="abs" style="left:965px;top:354px" width="680" height="290" viewBox="965 354 680 290">
<path d="M1026.5 377.0 L1026.5 607.0 M1046.5 377.0 L1046.5 607.0 M1066.5 377.0 L1066.5 607.0 M1086.5 377.0 L1086.5 607.0 M1106.5 377.0 L1106.5 607.0 M1125.5 377.0 L1125.5 607.0 M1145.5 377.0 L1145.5 607.0 M1165.5 377.0 L1165.5 607.0 M1185.5 377.0 L1185.5 607.0 M1205.5 377.0 L1205.5 607.0 M1224.5 377.0 L1224.5 607.0 M1244.5 377.0 L1244.5 607.0 M1264.5 377.0 L1264.5 607.0 M1284.5 377.0 L1284.5 607.0 M1304.5 377.0 L1304.5 607.0 M1323.5 377.0 L1323.5 607.0 M1343.5 377.0 L1343.5 607.0 M1363.5 377.0 L1363.5 607.0 M1383.5 377.0 L1383.5 607.0 M1403.5 377.0 L1403.5 607.0 M1422.5 377.0 L1422.5 607.0 M1442.5 377.0 L1442.5 607.0 M1462.5 377.0 L1462.5 607.0 M1482.5 377.0 L1482.5 607.0 M1502.5 377.0 L1502.5 607.0 M1521.5 377.0 L1521.5 607.0 M1541.5 377.0 L1541.5 607.0 M1561.5 377.0 L1561.5 607.0 M1581.5 377.0 L1581.5 607.0 M1601.5 377.0 L1601.5 607.0 M1007.0 568.5 L1621.0 568.5 M1007.0 530.5 L1621.0 530.5 M1007.0 492.5 L1621.0 492.5 M1007.0 453.5 L1621.0 453.5 M1007.0 415.5 L1621.0 415.5" stroke="#d5d5d5" stroke-width="1" fill="none"/>
<rect x="1007.30" y="585.99" width="19.21" height="21.01" fill="rgba(16,101,210,0.4)" stroke="#1a6ade" stroke-width="1.2"/>
<rect x="1027.11" y="571.20" width="19.21" height="35.80" fill="rgba(16,101,210,0.4)" stroke="#1a6ade" stroke-width="1.2"/>
<rect x="1046.91" y="576.95" width="19.21" height="30.05" fill="rgba(16,101,210,0.4)" stroke="#1a6ade" stroke-width="1.2"/>
<rect x="1066.72" y="587.22" width="19.21" height="19.78" fill="rgba(16,101,210,0.4)" stroke="#1a6ade" stroke-width="1.2"/>
<rect x="1086.53" y="578.63" width="19.21" height="28.37" fill="rgba(16,101,210,0.4)" stroke="#1a6ade" stroke-width="1.2"/>
<rect x="1106.33" y="572.04" width="19.21" height="34.96" fill="rgba(16,101,210,0.4)" stroke="#1a6ade" stroke-width="1.2"/>
<rect x="1126.14" y="553.49" width="19.21" height="53.51" fill="rgba(16,101,210,0.4)" stroke="#1a6ade" stroke-width="1.2"/>
<rect x="1145.95" y="458.50" width="19.21" height="148.50" fill="rgba(16,101,210,0.4)" stroke="#1a6ade" stroke-width="1.2"/>
<rect x="1165.75" y="587.22" width="19.21" height="19.78" fill="rgba(16,101,210,0.4)" stroke="#1a6ade" stroke-width="1.2"/>
<rect x="1185.56" y="591.74" width="19.21" height="15.26" fill="rgba(16,101,210,0.4)" stroke="#1a6ade" stroke-width="1.2"/>
<rect x="1205.36" y="588.06" width="19.21" height="18.94" fill="rgba(16,101,210,0.4)" stroke="#1a6ade" stroke-width="1.2"/>
<rect x="1225.17" y="578.63" width="19.21" height="28.37" fill="rgba(16,101,210,0.4)" stroke="#1a6ade" stroke-width="1.2"/>
<rect x="1244.98" y="546.89" width="19.21" height="60.11" fill="rgba(16,101,210,0.4)" stroke="#1a6ade" stroke-width="1.2"/>
<rect x="1264.78" y="550.65" width="19.21" height="56.35" fill="rgba(16,101,210,0.4)" stroke="#1a6ade" stroke-width="1.2"/>
<rect x="1284.59" y="537.08" width="19.21" height="69.92" fill="rgba(16,101,210,0.4)" stroke="#1a6ade" stroke-width="1.2"/>
<rect x="1304.40" y="562.15" width="19.21" height="44.85" fill="rgba(16,101,210,0.4)" stroke="#1a6ade" stroke-width="1.2"/>
<rect x="1324.20" y="590.98" width="19.21" height="16.02" fill="rgba(16,101,210,0.4)" stroke="#1a6ade" stroke-width="1.2"/>
<rect x="1344.01" y="568.36" width="19.21" height="38.64" fill="rgba(16,101,210,0.4)" stroke="#1a6ade" stroke-width="1.2"/>
<rect x="1363.82" y="494.30" width="19.21" height="112.70" fill="rgba(16,101,210,0.4)" stroke="#1a6ade" stroke-width="1.2"/>
<rect x="1383.62" y="539.92" width="19.21" height="67.08" fill="rgba(16,101,210,0.4)" stroke="#1a6ade" stroke-width="1.2"/>
<rect x="1403.43" y="527.27" width="19.21" height="79.73" fill="rgba(16,101,210,0.4)" stroke="#1a6ade" stroke-width="1.2"/>
<rect x="1423.24" y="538.31" width="19.21" height="68.69" fill="rgba(16,101,210,0.4)" stroke="#1a6ade" stroke-width="1.2"/>
<rect x="1443.04" y="581.93" width="19.21" height="25.07" fill="rgba(16,101,210,0.4)" stroke="#1a6ade" stroke-width="1.2"/>
<rect x="1462.85" y="593.81" width="19.21" height="13.19" fill="rgba(16,101,210,0.4)" stroke="#1a6ade" stroke-width="1.2"/>
<rect x="1482.65" y="593.05" width="19.21" height="13.95" fill="rgba(16,101,210,0.4)" stroke="#1a6ade" stroke-width="1.2"/>
<rect x="1502.46" y="504.27" width="19.21" height="102.73" fill="rgba(16,101,210,0.4)" stroke="#1a6ade" stroke-width="1.2"/>
<rect x="1522.27" y="404.98" width="19.21" height="202.02" fill="rgba(16,101,210,0.4)" stroke="#1a6ade" stroke-width="1.2"/>
<rect x="1542.07" y="507.87" width="19.21" height="99.13" fill="rgba(16,101,210,0.4)" stroke="#1a6ade" stroke-width="1.2"/>
<rect x="1561.88" y="606.23" width="19.21" height="0.77" fill="rgba(16,101,210,0.4)" stroke="#1a6ade" stroke-width="1.2"/>
<rect x="1581.69" y="606.23" width="19.21" height="0.77" fill="rgba(16,101,210,0.4)" stroke="#1a6ade" stroke-width="1.2"/>
<rect x="1601.49" y="606.23" width="19.21" height="0.77" fill="rgba(16,101,210,0.4)" stroke="#1a6ade" stroke-width="1.2"/>
<rect x="1006.0" y="376.0" width="616.0" height="232.0" fill="none" stroke="#545454" stroke-width="2"/>
<text x="1002" y="612.2" text-anchor="end" font-family="Liberation Sans" font-size="11" fill="#545454">0</text>
<text x="1002" y="573.9" text-anchor="end" font-family="Liberation Sans" font-size="11" fill="#545454">50</text>
<text x="1002" y="535.5" text-anchor="end" font-family="Liberation Sans" font-size="11" fill="#545454">100</text>
<text x="1002" y="497.2" text-anchor="end" font-family="Liberation Sans" font-size="11" fill="#545454">150</text>
<text x="1002" y="458.9" text-anchor="end" font-family="Liberation Sans" font-size="11" fill="#545454">200</text>
<text x="1002" y="420.5" text-anchor="end" font-family="Liberation Sans" font-size="11" fill="#545454">250</text>
<text x="1002" y="382.2" text-anchor="end" font-family="Liberation Sans" font-size="11" fill="#545454">300</text>
<text x="1007.0" y="624" text-anchor="middle" font-family="Liberation Sans" font-size="11" fill="#545454">01</text>
<text x="1026.8" y="624" text-anchor="middle" font-family="Liberation Sans" font-size="11" fill="#545454">02</text>
<text x="1046.6" y="624" text-anchor="middle" font-family="Liberation Sans" font-size="11" fill="#545454">03</text>
<text x="1066.4" y="624" text-anchor="middle" font-family="Liberation Sans" font-size="11" fill="#545454">04</text>
<text x="1086.2" y="624" text-anchor="middle" font-family="Liberation Sans" font-size="11" fill="#545454">05</text>
<text x="1106.0" y="624" text-anchor="middle" font-family="Liberation Sans" font-size="11" fill="#545454">06</text>
<text x="1125.8" y="624" text-anchor="middle" font-family="Liberation Sans" font-size="11" fill="#545454">07</text>
<text x="1145.6" y="624" text-anchor="middle" font-family="Liberation Sans" font-size="11" fill="#545454">08</text>
<text x="1165.5" y="624" text-anchor="middle" font-family="Liberation Sans" font-size="11" fill="#545454">09</text>
<text x="1185.3" y="624" text-anchor="middle" font-family="Liberation Sans" font-size="11" fill="#545454">10</text>
<text x="1205.1" y="624" text-anchor="middle" font-family="Liberation Sans" font-size="11" fill="#545454">11</text>
<text x="1224.9" y="624" text-anchor="middle" font-family="Liberation Sans" font-size="11" fill="#545454">12</text>
<text x="1244.7" y="624" text-anchor="middle" font-family="Liberation Sans" font-size="11" fill="#545454">13</text>
<text x="1264.5" y="624" text-anchor="middle" font-family="Liberation Sans" font-size="11" fill="#545454">14</text>
<text x="1284.3" y="624" text-anchor="middle" font-family="Liberation Sans" font-size="11" fill="#545454">15</text>
<text x="1304.1" y="624" text-anchor="middle" font-family="Liberation Sans" font-size="11" fill="#545454">16</text>
<text x="1323.9" y="624" text-anchor="middle" font-family="Liberation Sans" font-size="11" fill="#545454">17</text>
<text x="1343.7" y="624" text-anchor="middle" font-family="Liberation Sans" font-size="11" fill="#545454">18</text>
<text x="1363.5" y="624" text-anchor="middle" font-family="Liberation Sans" font-size="11" fill="#545454">19</text>
<text x="1383.3" y="624" text-anchor="middle" font-family="Liberation Sans" font-size="11" fill="#545454">20</text>
<text x="1403.1" y="624" text-anchor="middle" font-family="Liberation Sans" font-size="11" fill="#545454">21</text>
<text x="1422.9" y="624" text-anchor="middle" font-family="Liberation Sans" font-size="11" fill="#545454">22</text>
<text x="1442.7" y="624" text-anchor="middle" font-family="Liberation Sans" font-size="11" fill="#545454">23</text>
<text x="1462.5" y="624" text-anchor="middle" font-family="Liberation Sans" font-size="11" fill="#545454">24</text>
<text x="1482.4" y="624" text-anchor="middle" font-family="Liberation Sans" font-size="11" fill="#545454">25</text>
<text x="1502.2" y="624" text-anchor="middle" font-family="Liberation Sans" font-size="11" fill="#545454">26</text>
<text x="1522.0" y="624" text-anchor="middle" font-family="Liberation Sans" font-size="11" fill="#545454">27</text>
<text x="1541.8" y="624" text-anchor="middle" font-family="Liberation Sans" font-size="11" fill="#545454">28</text>
<text x="1561.6" y="624" text-anchor="middle" font-family="Liberation Sans" font-size="11" fill="#545454">29</text>
<text x="1581.4" y="624" text-anchor="middle" font-family="Liberation Sans" font-size="11" fill="#545454">30</text>
<text x="1601.2" y="624" text-anchor="middle" font-family="Liberation Sans" font-size="11" fill="#545454">31</text>
<rect x="1546" y="381" width="72" height="31" fill="#fff" fill-opacity="0.85"/>
<rect x="1547.5" y="382.5" width="13" height="13" fill="none" stroke="#ccc"/><rect x="1549" y="384" width="10" height="10" fill="#9ad1f1"/>
<rect x="1547.5" y="397.5" width="13" height="13" fill="none" stroke="#ccc"/><rect x="1549" y="399" width="10" height="10" fill="#1155cc"/>
<text x="1561" y="393.5" font-family="Liberation Sans" font-size="11" letter-spacing="0.3" fill="#545454">Orders</text>
<text x="1561" y="408.5" font-family="Liberation Sans" font-size="11" letter-spacing="0.3" fill="#545454">Customers</text>
</svg>
<div class="panel" style="left:255px;top:663px;width:443px;height:83px">
<div class="ph"><span class="ic" style="left:15px;top:13px;line-height:0"><svg width="14" height="15" viewBox="0 0 14 15"><rect x="0.5" y="2" width="13" height="12.5" fill="#4c4d5a"/><rect x="2" y="0" width="2" height="4" fill="#4c4d5a"/><rect x="10" y="0" width="2" height="4" fill="#4c4d5a"/><g fill="#f5f5f5"><rect x="1.7" y="6" width="2.2" height="1.8"/><rect x="4.7" y="6" width="2.2" height="1.8"/><rect x="7.7" y="6" width="2.2" height="1.8"/><rect x="10.4" y="6" width="2" height="1.8"/><rect x="1.7" y="8.7" width="2.2" height="1.8"/><rect x="4.7" y="8.7" width="2.2" height="1.8"/><rect x="7.7" y="8.7" width="2.2" height="1.8"/><rect x="10.4" y="8.7" width="2" height="1.8"/><rect x="1.7" y="11.4" width="2.2" height="1.8"/><rect x="4.7" y="11.4" width="2.2" height="1.8"/><rect x="7.7" y="11.4" width="2.2" height="1.8"/><rect x="10.4" y="11.4" width="2" height="1.8"/></g></svg></span><span class="t" style="left:38px;top:13px;font-size:15.25px">Recent Activity</span></div>
<div class="abs" style="left:0;top:55px;width:100%;text-align:center;font-size:13px;letter-spacing:0.25px;color:#555">No results!</div>
</div>
<div class="panel" style="left:728px;top:663px;width:917px;height:200px">
<div class="ph"><span class="ic" style="left:16px;top:14px;line-height:0"><svg width="15" height="13" viewBox="0 0 16 14"><path d="M0 1 L3 1 L4 3 L15 3 L14 8 L5 9 L5.5 10 L13 10 L13 11.5 L4.5 11.5 L2 2.3 L0 2.3Z" fill="#4c4d5a"/><circle cx="5.5" cy="12.5" r="1.3" fill="#4c4d5a"/><circle cx="12" cy="12.5" r="1.3" fill="#4c4d5a"/></svg></span><span class="t" style="left:38px;top:12px;font-size:15.5px">Latest Orders</span></div>
</div>
<div class="abs" style="left:729px;top:741px;width:914px;height:1px;background:#ddd"></div>
<div class="abs" style="left:729px;top:794px;width:914px;height:1px;background:#ddd"></div>
<div class="abs" style="right:812.7px;top:717px;font-size:13px;font-weight:bold;color:#555;letter-spacing:0.3px;white-space:nowrap">Order ID</div>
<div class="abs" style="left:869px;top:717px;font-size:13px;font-weight:bold;color:#555;letter-spacing:0.3px;white-space:nowrap">Customer</div>
<div class="abs" style="left:1133px;top:717px;font-size:13px;font-weight:bold;color:#555;letter-spacing:0.3px;white-space:nowrap">Status</div>
<div class="abs" style="left:1254px;top:717px;font-size:13px;font-weight:bold;color:#555;letter-spacing:0.3px;white-space:nowrap">Date Added</div>
<div class="abs" style="right:138.7px;top:717px;font-size:13px;font-weight:bold;color:#555;letter-spacing:0.3px;white-space:nowrap">Total</div>
<div class="abs" style="right:30.7px;top:717px;font-size:13px;font-weight:bold;color:#555;letter-spacing:0.3px;white-space:nowrap">Action</div>
<div class="abs" style="right:812.9px;top:761px;font-size:13px;font-weight:normal;color:#555;letter-spacing:0.1px;white-space:nowrap">10264</div>
<div class="abs" style="left:869px;top:761px;font-size:13px;font-weight:normal;color:#555;letter-spacing:0.45px;white-space:nowrap">Володимир Дмитрів</div>
<div class="abs" style="left:1133px;top:761px;font-size:13px;font-weight:normal;color:#555;letter-spacing:0.45px;white-space:nowrap">Pending</div>
<div class="abs" style="left:1254px;top:761px;font-size:13px;font-weight:normal;color:#555;letter-spacing:0.45px;white-space:nowrap">28/10/2020</div>
<div class="abs" style="right:139px;top:761px;font-size:13px;font-weight:normal;color:#555;letter-spacing:0px;white-space:nowrap">$105.00</div>
<div class="abs" style="left:1594px;top:750px;width:41px;height:36px;background:#4fb5d6;border-radius:3px"><svg class="abs" style="left:14px;top:13px" width="14" height="10" viewBox="0 0 14 10"><path d="M0.3 5 Q7 -2.8 13.7 5 Q7 12.8 0.3 5Z" fill="#fff"/><circle cx="7" cy="5" r="2.9" fill="#4fb5d6"/><circle cx="7" cy="5" r="1.7" fill="#fff"/></svg></div>
<div class="abs" style="right:812.9px;top:814px;font-size:13px;font-weight:normal;color:#555;letter-spacing:0.1px;white-space:nowrap">10262</div>
<div class="abs" style="left:869px;top:814px;font-size:13px;font-weight:normal;color:#555;letter-spacing:0.45px;white-space:nowrap">fatimah mustafa</div>
<div class="abs" style="left:1133px;top:814px;font-size:13px;font-weight:normal;color:#555;letter-spacing:0.45px;white-space:nowrap">Pending</div>
<div class="abs" style="left:1254px;top:814px;font-size:13px;font-weight:normal;color:#555;letter-spacing:0.45px;white-space:nowrap">28/10/2020</div>
<div class="abs" style="right:139px;top:814px;font-size:13px;font-weight:normal;color:#555;letter-spacing:0px;white-space:nowrap">$105.00</div>
<div class="abs" style="left:1594px;top:803px;width:41px;height:36px;background:#4fb5d6;border-radius:3px"><svg class="abs" style="left:14px;top:13px" width="14" height="10" viewBox="0 0 14 10"><path d="M0.3 5 Q7 -2.8 13.7 5 Q7 12.8 0.3 5Z" fill="#fff"/><circle cx="7" cy="5" r="2.9" fill="#4fb5d6"/><circle cx="7" cy="5" r="1.7" fill="#fff"/></svg></div>
</body></html>
